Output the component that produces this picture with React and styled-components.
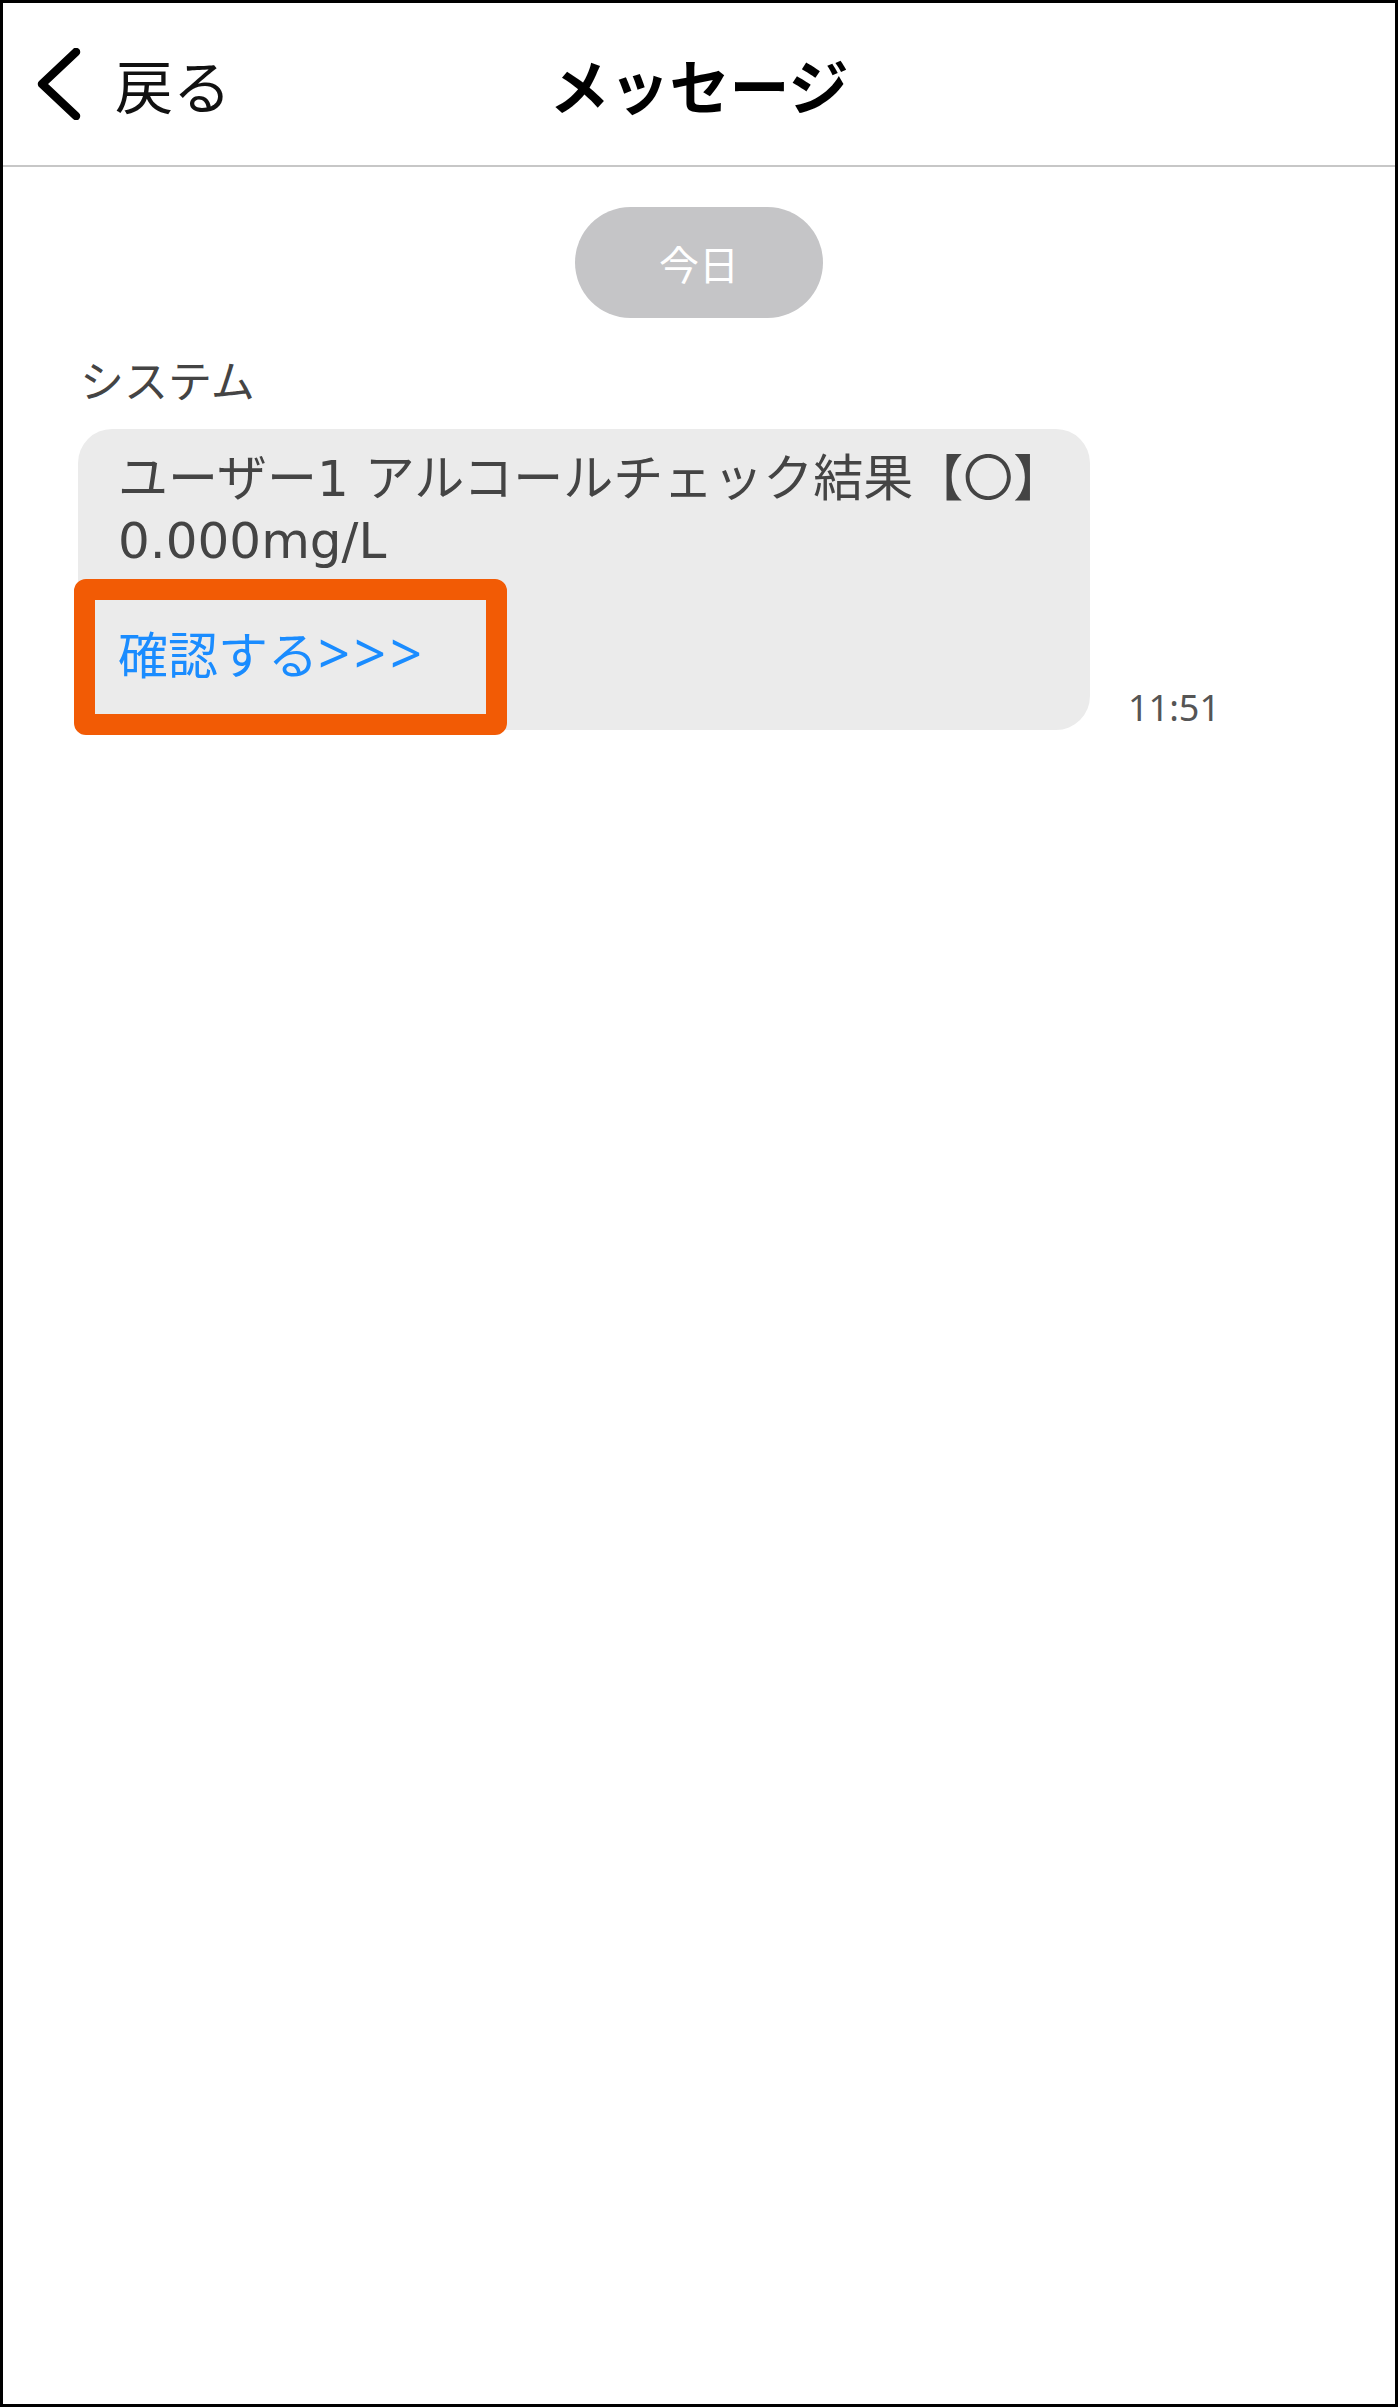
import React from "react";
import styled, { createGlobalStyle } from "styled-components";

const GlobalStyle = createGlobalStyle`
  html, body {
    margin: 0;
    padding: 0;
    background: #ffffff;
  }
  body {
    font-family: "Noto Sans", "Noto Sans CJK JP", sans-serif;
  }
`;

const Frame = styled.div`
  box-sizing: border-box;
  width: 1398px;
  height: 2407px;
  border: 3px solid #000;
  background: #fff;
  display: flex;
  flex-direction: column;
`;

const Header = styled.header`
  flex: 0 0 auto;
  height: 162px;
  border-bottom: 2px solid #c7c7c7;
  display: grid;
  grid-template-columns: 1fr auto 1fr;
  align-items: center;
`;

const BackButton = styled.button`
  justify-self: start;
  display: flex;
  align-items: center;
  gap: 33px;
  margin: 0;
  padding: 0 0 0 33px;
  border: 0;
  background: none;
  cursor: pointer;
  font-family: "Noto Sans CJK JP", sans-serif;
  font-size: 58px;
  font-weight: 400;
  line-height: 1;
  color: #111;
`;

const Title = styled.h1`
  margin: 0;
  font-family: "Noto Sans CJK JP", sans-serif;
  font-size: 60px;
  font-weight: 700;
  line-height: 1;
  color: #000;
`;

const Content = styled.main`
  flex: 1 1 auto;
  display: flex;
  flex-direction: column;
  padding: 40px 75px 0;
`;

const DatePill = styled.div`
  align-self: center;
  width: 248px;
  height: 111px;
  border-radius: 56px;
  background: #c5c5c7;
  color: #fff;
  display: flex;
  align-items: center;
  justify-content: center;
  font-family: "Noto Sans CJK JP", sans-serif;
  font-size: 40px;
  line-height: 1;
`;

const SenderName = styled.div`
  margin: 36px 0 0 2px;
  font-family: "Noto Sans CJK JP", sans-serif;
  font-size: 44px;
  line-height: 51px;
  color: #444;
`;

const MessageRow = styled.div`
  margin-top: 24px;
  display: flex;
  align-items: flex-end;
  gap: 38px;
`;

const Bubble = styled.div`
  position: relative;
  box-sizing: border-box;
  width: 1012px;
  padding: 19px 40px 44px;
  background: #ebebeb;
  border-radius: 34px;
  font-family: "DejaVu Sans", "Noto Sans CJK JP", sans-serif;
  font-size: 50px;
  line-height: 62px;
  color: #444;
`;

const BodyLine = styled.div`
  height: 62px;
  white-space: nowrap;
`;

const LinkLine = styled.a`
  display: block;
  height: 62px;
  margin-top: 52px;
  color: #1a8cff;
  text-decoration: none;
  cursor: pointer;
  white-space: nowrap;
`;

const Arrows = styled.span`
  font-family: "Noto Sans", sans-serif;
  font-size: 56px;
  line-height: 1;
  letter-spacing: 4px;
`;

const Highlight = styled.span`
  position: absolute;
  left: -4px;
  top: 150px;
  width: 433px;
  height: 156px;
  box-sizing: border-box;
  border: 21px solid #f25b05;
  border-radius: 12px;
  pointer-events: none;
`;

const Time = styled.span`
  margin-bottom: 4px;
  font-size: 36px;
  line-height: 36px;
  color: #555;
`;

const ChevronLeft = () => (
  <svg width="46" height="72" viewBox="0 0 46 72" aria-hidden="true">
    <polyline
      points="40,4 6,36 40,68"
      fill="none"
      stroke="#000"
      strokeWidth="8.5"
      strokeLinecap="round"
      strokeLinejoin="round"
    />
  </svg>
);

export default function App() {
  return (
    <>
      <GlobalStyle />
      <Frame>
        <Header>
          <BackButton type="button">
            <ChevronLeft />
            <span>戻る</span>
          </BackButton>
          <Title>メッセージ</Title>
          <div />
        </Header>
        <Content>
          <DatePill>今日</DatePill>
          <SenderName>システム</SenderName>
          <MessageRow>
            <Bubble>
              <BodyLine>ユーザー1 アルコールチェック結果【〇】</BodyLine>
              <BodyLine>0.000mg/L</BodyLine>
              <LinkLine>
                確認する<Arrows>&gt;&gt;&gt;</Arrows>
              </LinkLine>
              <Highlight />
            </Bubble>
            <Time>11:51</Time>
          </MessageRow>
        </Content>
      </Frame>
    </>
  );
}
